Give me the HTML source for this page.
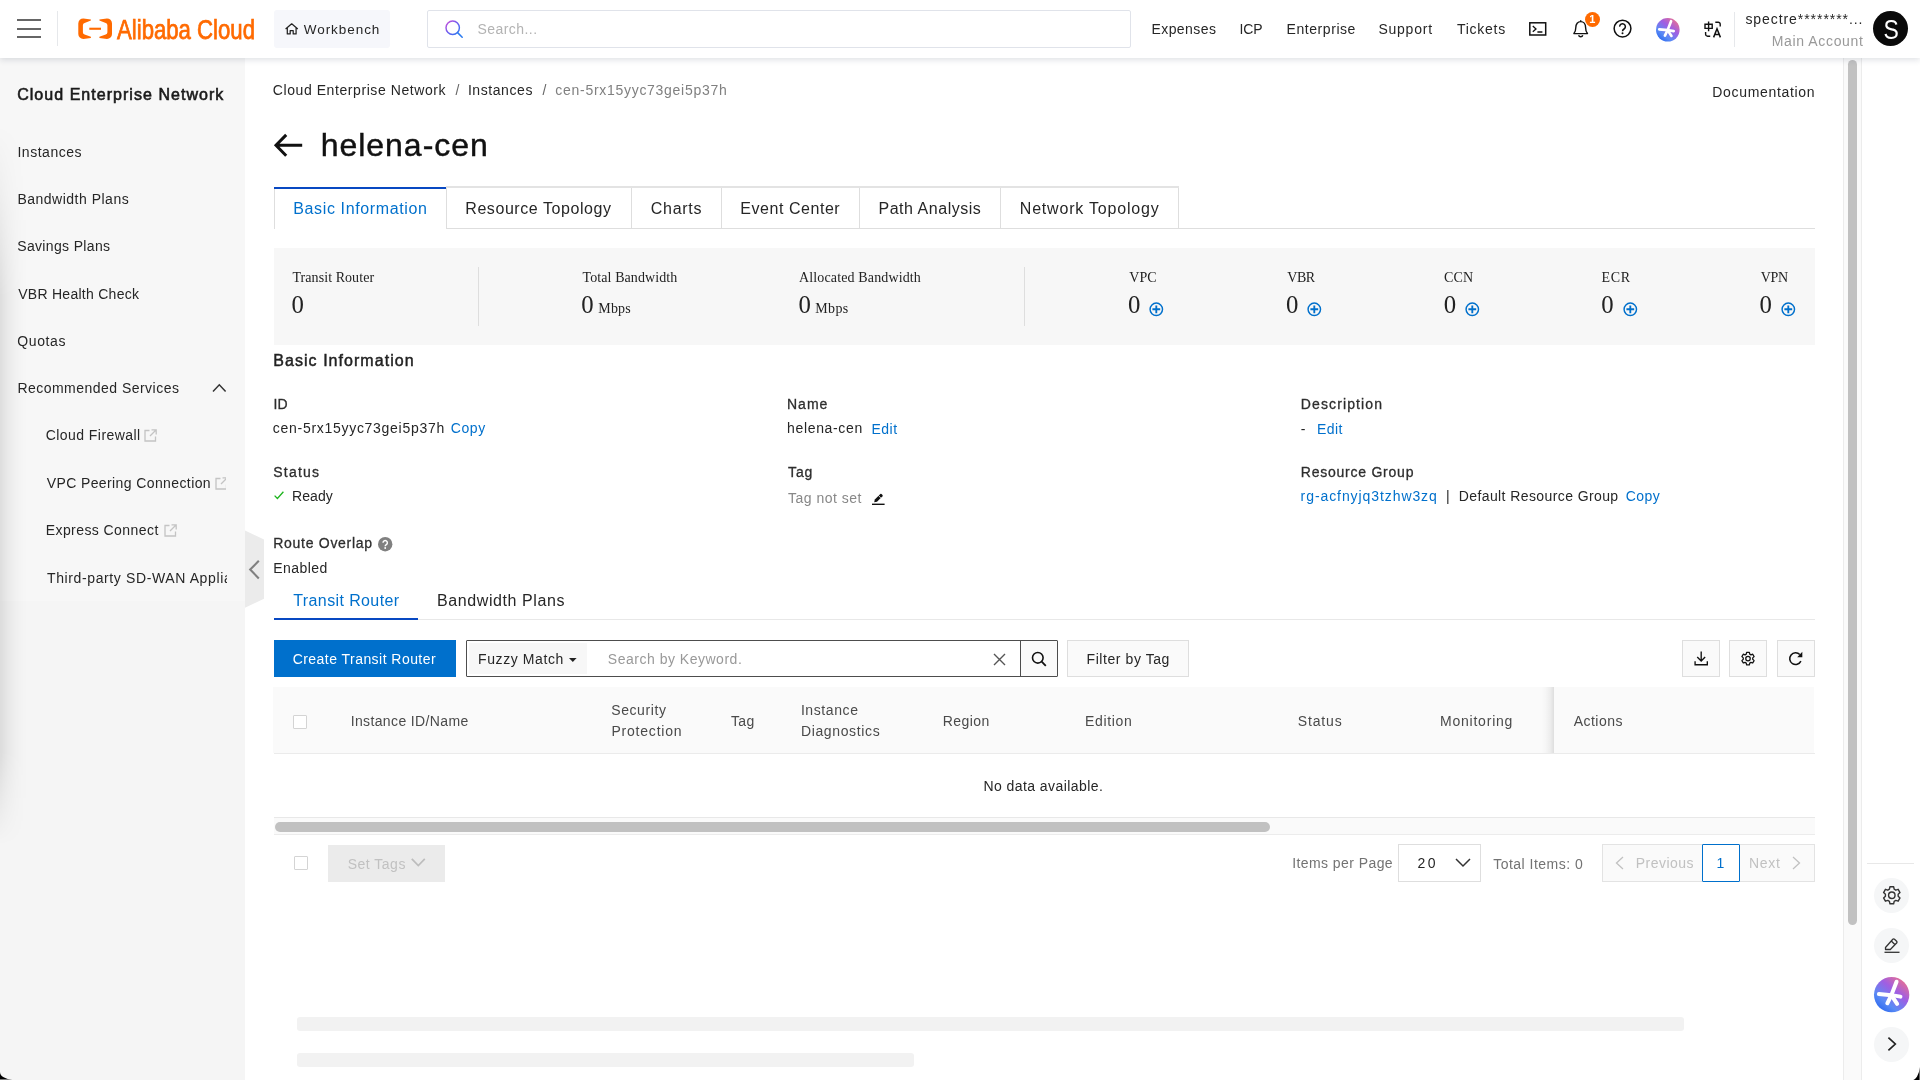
<!DOCTYPE html>
<html lang="en">
<head>
<meta charset="utf-8">
<title>Cloud Enterprise Network</title>
<style>
*{box-sizing:border-box;margin:0;padding:0}
html,body{width:1920px;height:1080px;overflow:hidden;background:#fff;font-family:"Liberation Sans",sans-serif;color:#333}
.a{position:absolute}
.t{position:absolute;white-space:pre;display:block}
#top{left:0;top:0;width:1920px;height:58px;background:#fff;box-shadow:0 2px 6px rgba(25,40,70,.14);z-index:5}
#side{left:0;top:58px;width:245px;height:1022px;background:#f7f7f7}
#sideshade{left:0;top:125px;width:28px;height:720px;background:linear-gradient(90deg,rgba(0,0,0,.1),rgba(0,0,0,.062) 22%,rgba(0,0,0,.028) 50%,rgba(0,0,0,.008) 78%,rgba(0,0,0,0));-webkit-mask-image:linear-gradient(180deg,transparent,rgba(0,0,0,.35) 10%,#000 24%,#000 87%,rgba(0,0,0,.3) 96%,transparent);mask-image:linear-gradient(180deg,transparent,rgba(0,0,0,.35) 10%,#000 24%,#000 87%,rgba(0,0,0,.3) 96%,transparent)}
#rbar{left:1860.5px;top:58px;width:59.5px;height:1022px;background:#fff;border-left:1px solid #ececec}
#vtrack{left:1843px;top:58px;width:18px;height:1022px;background:#fafafa;border-left:1px solid #ececec}
#vthumb{left:1848px;top:60.2px;width:9px;height:864.6px;background:#c1c1c1;border-radius:5px}
.ln{position:absolute;background:#e3e4e6}
.box{position:absolute;border:1px solid #dedede;background:#fff}
svg{position:absolute;overflow:visible}
</style>
</head>
<body>
<!-- sidebar -->
<div class="a" id="side"></div>
<div class="a" style="left:0;top:600.6px;width:245px;height:479.4px;background:#f5f5f5"></div>
<div class="a" id="sideshade"></div>
<!-- collapse handle -->
<svg style="left:245px;top:529px" width="20" height="80" viewBox="0 0 20 80"><path d="M0 1.4 L19 10.6 L19 69.7 L0 78.8 Z" fill="#ebebeb"/><path d="M13.8 31.8 L5.2 40.6 L13.8 49.4" fill="none" stroke="#808080" stroke-width="2.1"/></svg>
<!-- sidebar chevron up -->
<svg style="left:212px;top:383px" width="15" height="10" viewBox="0 0 15 10"><path d="M1 8.5 L7.3 1.8 L13.6 8.5" fill="none" stroke="#333" stroke-width="1.5"/></svg>
<!-- external link icons -->
<svg style="left:143.9px;top:429.4px" width="13" height="13" viewBox="0 0 13 13"><path d="M5.5 1.5H1V12H11.5V7.5M7.5 0.8H12.2V5.5M12 1L6 7" fill="none" stroke="#c4c4c4" stroke-width="1.3"/></svg>
<svg style="left:214.5px;top:477px" width="13" height="13" viewBox="0 0 13 13"><path d="M5.5 1.5H1V12H11.5V7.5M7.5 0.8H12.2V5.5M12 1L6 7" fill="none" stroke="#c4c4c4" stroke-width="1.3"/></svg>
<svg style="left:164px;top:524.3px" width="13" height="13" viewBox="0 0 13 13"><path d="M5.5 1.5H1V12H11.5V7.5M7.5 0.8H12.2V5.5M12 1L6 7" fill="none" stroke="#c4c4c4" stroke-width="1.3"/></svg>
<div class="a" style="left:226px;top:470px;width:19px;height:30px;background:#f7f7f7"></div>

<!-- right bar + scrollbar -->
<div class="a" id="vtrack"></div>
<div class="a" id="vthumb"></div>
<div class="a" id="rbar"></div>
<div class="ln" style="left:1867px;top:862.5px;width:47px;height:1px;background:#e8e8e8"></div>
<div class="a" style="left:1873.8px;top:877.6px;width:35.3px;height:35.3px;border-radius:50%;background:#f5f6f7"></div>
<div class="a" style="left:1873.8px;top:927.5px;width:35.3px;height:35.3px;border-radius:50%;background:#f5f6f7"></div>
<div class="a" style="left:1873.8px;top:1026.7px;width:35.3px;height:35.3px;border-radius:50%;background:#f5f6f7"></div>
<!-- gear (right bar) -->
<svg style="left:1880.8px;top:885.3px" width="21.6" height="21.6" viewBox="0 0 20 20"><path d="M8.3 1.6h3.4l.5 2.3 1.5.9 2.2-.8 1.7 3-1.7 1.6v1.8l1.7 1.6-1.7 3-2.2-.8-1.5.9-.5 2.3H8.3l-.5-2.3-1.5-.9-2.2.8-1.7-3 1.7-1.6V8.6L2.4 7l1.7-3 2.2.8 1.5-.9z" fill="none" stroke="#333" stroke-width="1.3" stroke-linejoin="round"/><circle cx="10" cy="9.5" r="3" fill="none" stroke="#333" stroke-width="1.3"/></svg>
<!-- edit (right bar) -->
<svg style="left:1883px;top:936px" width="18" height="18" viewBox="0 0 18 18"><path d="M2.5 11.5 L9.8 3.2 a1.2 1.2 0 0 1 1.7 0 L13.6 5.3 a1.2 1.2 0 0 1 0 1.7 L7.3 13.5 H2.5 Z M8.3 5 L11.8 8.5" fill="none" stroke="#333" stroke-width="1.3" stroke-linejoin="round"/><path d="M1.5 16.3H16.5" stroke="#333" stroke-width="1.3"/></svg>
<!-- AI logo (right bar) -->
<svg style="left:1873.8px;top:976.9px" width="35.3" height="35.3" viewBox="0 0 36 36"><defs><linearGradient id="g2" x1="0.9" y1="0.1" x2="0.2" y2="0.95"><stop offset="0" stop-color="#ea7090"/><stop offset="0.38" stop-color="#a05ee2"/><stop offset="0.75" stop-color="#5b8bf5"/><stop offset="1" stop-color="#2f6bf0"/></linearGradient></defs><circle cx="18" cy="18" r="18" fill="url(#g2)"/><g stroke="#fff" stroke-width="4.1" stroke-linecap="round"><path d="M23 4.8 L17.7 18.5"/><path d="M5 17.4 L17.7 18.5"/><path d="M17.7 18.5 L13.6 26.8"/><path d="M17.7 18.5 L23.6 27.4"/><path d="M17.7 18.5 L27 20"/></g></svg>
<!-- chevron right (right bar) -->
<svg style="left:1886px;top:1035.4px" width="12" height="18" viewBox="0 0 12 18"><path d="M2.4 2.6 L9.3 9 L2.4 15.4" fill="none" stroke="#222" stroke-width="1.7"/></svg>

<!-- breadcrumb / title -->
<svg style="left:273.6px;top:133.5px" width="30" height="23" viewBox="0 0 30 23"><path d="M2 11.3H28.2M12.2 0.9 L2 11.3 L12.2 21.7" fill="none" stroke="#111" stroke-width="3"/></svg>

<!-- tabs -->
<div class="box" style="left:273.5px;top:186.5px;width:905px;height:42px;border-color:#dedede"></div>
<div class="ln" style="left:273.5px;top:227.5px;width:1541px;height:1px;background:#dedede"></div>
<div class="ln" style="left:446px;top:187px;width:1px;height:41px;background:#dedede"></div>
<div class="ln" style="left:631px;top:187px;width:1px;height:41px;background:#dedede"></div>
<div class="ln" style="left:721px;top:187px;width:1px;height:41px;background:#dedede"></div>
<div class="ln" style="left:859px;top:187px;width:1px;height:41px;background:#dedede"></div>
<div class="ln" style="left:1000px;top:187px;width:1px;height:41px;background:#dedede"></div>
<div class="a" style="left:274.5px;top:226px;width:171.5px;height:3px;background:#fff"></div>
<div class="ln" style="left:446px;top:186.3px;width:732.5px;height:1.5px;background:#e3e3e3"></div>
<div class="a" style="left:273.5px;top:186.6px;width:172.3px;height:2.1px;background:#0848c2"></div>

<!-- stats panel -->
<div class="a" style="left:273.5px;top:248px;width:1541px;height:96.5px;background:#f7f7f7"></div>
<div class="ln" style="left:478px;top:267px;width:1px;height:58.5px;background:#dedede"></div>
<div class="ln" style="left:1024px;top:267px;width:1px;height:58.5px;background:#dedede"></div>
<svg style="left:1149.4px;top:301.6px" width="14.6" height="14.6" viewBox="0 0 15 15"><circle cx="7.5" cy="7.5" r="6.4" fill="none" stroke="#0070cc" stroke-width="1.5"/><path d="M7.5 3.5V11.5M3.5 7.5H11.5" stroke="#0070cc" stroke-width="1.9"/></svg>
<svg style="left:1307.2px;top:301.6px" width="14.6" height="14.6" viewBox="0 0 15 15"><circle cx="7.5" cy="7.5" r="6.4" fill="none" stroke="#0070cc" stroke-width="1.5"/><path d="M7.5 3.5V11.5M3.5 7.5H11.5" stroke="#0070cc" stroke-width="1.9"/></svg>
<svg style="left:1465.0px;top:301.6px" width="14.6" height="14.6" viewBox="0 0 15 15"><circle cx="7.5" cy="7.5" r="6.4" fill="none" stroke="#0070cc" stroke-width="1.5"/><path d="M7.5 3.5V11.5M3.5 7.5H11.5" stroke="#0070cc" stroke-width="1.9"/></svg>
<svg style="left:1622.8px;top:301.6px" width="14.6" height="14.6" viewBox="0 0 15 15"><circle cx="7.5" cy="7.5" r="6.4" fill="none" stroke="#0070cc" stroke-width="1.5"/><path d="M7.5 3.5V11.5M3.5 7.5H11.5" stroke="#0070cc" stroke-width="1.9"/></svg>
<svg style="left:1780.7px;top:301.6px" width="14.6" height="14.6" viewBox="0 0 15 15"><circle cx="7.5" cy="7.5" r="6.4" fill="none" stroke="#0070cc" stroke-width="1.5"/><path d="M7.5 3.5V11.5M3.5 7.5H11.5" stroke="#0070cc" stroke-width="1.9"/></svg>


<!-- basic info icons -->
<svg style="left:273.5px;top:491px" width="10" height="9" viewBox="0 0 10 9"><path d="M0.6 4.6 L3.4 7.5 L9.4 0.8" fill="none" stroke="#1eb41e" stroke-width="1.3"/></svg>
<svg style="left:378.1px;top:536.5px" width="14.4" height="14.4" viewBox="0 0 14 14"><circle cx="7" cy="7" r="7" fill="#808080"/><path d="M4.9 5.6 a2.1 2.1 0 1 1 3.2 1.8 c-.8.5-1.1.8-1.1 1.6" fill="none" stroke="#fff" stroke-width="1.4"/><circle cx="7" cy="10.7" r=".9" fill="#fff"/></svg>
<svg style="left:872px;top:493px" width="13" height="12" viewBox="0 0 13 12"><path d="M2.2 9.3 L2.8 6.6 L8.3 1.1 a.9.9 0 0 1 1.2 0 l1 1 a.9.9 0 0 1 0 1.2 L5 8.8 Z" fill="#111"/><path d="M6.3 2.3L8.9 5.1" stroke="#fff" stroke-width="0.75"/><path d="M0 11.3H12.6" stroke="#111" stroke-width="1.4"/></svg>

<!-- sub tabs -->
<div class="ln" style="left:273.5px;top:618.9px;width:1541px;height:1.6px;background:#e8e8e8"></div>
<div class="a" style="left:273.5px;top:618.2px;width:144.6px;height:2.1px;background:#0848c2"></div>

<!-- toolbar -->
<div class="a" style="left:273.5px;top:640px;width:182.5px;height:37px;background:#0070cc"></div>
<div class="a" style="left:466px;top:640px;width:591.5px;height:37px;border:1px solid #4d4d4d;background:#fff;border-radius:1px"></div>
<div class="a" style="left:469px;top:643.2px;width:118px;height:30.6px;background:#f7f7f7"></div>
<svg style="left:569.2px;top:658px" width="7.6" height="4.2" viewBox="0 0 9 5" preserveAspectRatio="none"><path d="M0 0H9L4.5 4.8Z" fill="#222"/></svg>
<svg style="left:992.5px;top:652.5px" width="13" height="13" viewBox="0 0 13 13"><path d="M1 1L12 12M12 1L1 12" stroke="#555" stroke-width="1.4" fill="none"/></svg>
<div class="a" style="left:1021px;top:641px;width:35.5px;height:35px;background:#fafafa"></div>
<div class="ln" style="left:1020px;top:640px;width:1px;height:37px;background:#4d4d4d"></div>
<svg style="left:1031px;top:651px" width="16" height="16" viewBox="0 0 16 16"><circle cx="6.8" cy="6.8" r="5.3" fill="none" stroke="#111" stroke-width="1.6"/><path d="M10.7 10.7L14.8 14.8" stroke="#111" stroke-width="1.8"/></svg>
<div class="box" style="left:1067px;top:640px;width:121.5px;height:37px;background:#fafafa"></div>
<div class="box" style="left:1682px;top:640px;width:37.5px;height:37px;background:#fafafa"></div>
<div class="box" style="left:1729px;top:640px;width:38px;height:37px;background:#fafafa"></div>
<div class="box" style="left:1777px;top:640px;width:37.5px;height:37px;background:#fafafa"></div>
<!-- download -->
<svg style="left:1693.8px;top:651px" width="14.4" height="15" viewBox="0 0 16 16" preserveAspectRatio="none"><path d="M8 0.5V10.5M3.6 6.3L8 10.7L12.4 6.3M1.2 10.8V14.6H14.8V10.8" fill="none" stroke="#111" stroke-width="1.5"/></svg>
<!-- gear small -->
<svg style="left:1740.2px;top:650.7px" width="16" height="16" viewBox="0 0 20 20"><path d="M8.3 1.6h3.4l.5 2.3 1.5.9 2.2-.8 1.7 3-1.7 1.6v1.8l1.7 1.6-1.7 3-2.2-.8-1.5.9-.5 2.3H8.3l-.5-2.3-1.5-.9-2.2.8-1.7-3 1.7-1.6V8.6L2.4 7l1.7-3 2.2.8 1.5-.9z" fill="none" stroke="#111" stroke-width="1.6" stroke-linejoin="round"/><circle cx="10" cy="9.5" r="2.8" fill="none" stroke="#111" stroke-width="1.6"/></svg>
<!-- refresh -->
<svg style="left:1788.2px;top:651px" width="15.4" height="15.4" viewBox="0 0 16 16"><path d="M13.4 10.6 A6.1 6.1 0 1 1 12.3 3.7" fill="none" stroke="#111" stroke-width="1.6"/><path d="M14.9 0.8V6.4H9.6Z" fill="#111"/></svg>

<!-- table -->
<div class="a" style="left:273.1px;top:687.2px;width:1541.4px;height:66.3px;background:#fafafa"></div>
<div class="ln" style="left:273.5px;top:753.4px;width:1541px;height:1.1px;background:#ebebeb"></div>
<div class="a" style="left:1541px;top:687.2px;width:13px;height:66.3px;background:linear-gradient(90deg,rgba(0,0,0,0),rgba(0,0,0,.015) 35%,rgba(0,0,0,.05) 70%,rgba(0,0,0,.115))"></div>
<div class="a" style="left:292.5px;top:715px;width:14px;height:14px;border:1px solid #d4d4d4;background:#fff;border-radius:1px"></div>
<div class="ln" style="left:273.5px;top:816.5px;width:1541px;height:1px;background:#e8e8e8"></div>
<div class="a" style="left:273.5px;top:817.5px;width:1541px;height:16.5px;background:#fafafa"></div>
<div class="ln" style="left:273.5px;top:833.5px;width:1541px;height:1px;background:#ececec"></div>
<div class="a" style="left:275px;top:822px;width:995px;height:9.5px;background:#c1c1c1;border-radius:5px"></div>

<!-- footer -->
<div class="a" style="left:293.5px;top:856.1px;width:14px;height:14px;border:1px solid #d4d4d4;background:#fff;border-radius:1px"></div>
<div class="a" style="left:328px;top:844.6px;width:117px;height:37.3px;background:#ebebeb"></div>
<svg style="left:411px;top:858px" width="15" height="9" viewBox="0 0 15 9"><path d="M0.8 0.8L7.3 7.6L13.8 0.8" fill="none" stroke="#bdbdbd" stroke-width="1.7"/></svg>
<div class="box" style="left:1398px;top:844px;width:82.5px;height:37.5px;"></div>
<svg style="left:1455px;top:857.5px" width="16" height="10" viewBox="0 0 16 10"><path d="M1 1L8 8L15 1" fill="none" stroke="#333" stroke-width="1.5"/></svg>
<div class="box" style="left:1602px;top:844px;width:212.5px;height:37.5px;background:#fafafa;border-color:#e3e3e3"></div>
<div class="a" style="left:1702px;top:844px;width:38px;height:37.5px;border:1px solid #0070cc;background:#fff;border-radius:1px"></div>
<svg style="left:1615px;top:856px" width="9" height="14" viewBox="0 0 9 14"><path d="M8 1L1.5 7L8 13" fill="none" stroke="#c1c1c1" stroke-width="1.3"/></svg>
<svg style="left:1792px;top:856px" width="9" height="14" viewBox="0 0 9 14"><path d="M1 1L7.5 7L1 13" fill="none" stroke="#c1c1c1" stroke-width="1.3"/></svg>

<!-- skeleton bars -->
<div class="a" style="left:297px;top:1017.1px;width:1387px;height:14.2px;background:#f2f2f2;border-radius:3px"></div>
<div class="a" style="left:297px;top:1052.6px;width:616.5px;height:14.2px;background:#f2f2f2;border-radius:3px"></div>

<!-- top bar -->
<div class="a" id="top"></div>
<div class="a" style="z-index:6;left:0;top:0;width:1920px;height:58px;will-change:transform">
  <div class="a" style="left:17px;top:19px;width:23.5px;height:2px;background:#666"></div>
  <div class="a" style="left:17px;top:27.7px;width:23.5px;height:2px;background:#666"></div>
  <div class="a" style="left:17px;top:36.3px;width:23.5px;height:2px;background:#666"></div>
  <div class="ln" style="left:57px;top:11px;width:1px;height:35px;background:#e6e8eb"></div>
  <!-- logo bracket -->
  <svg style="left:77.5px;top:18px" width="35" height="22" viewBox="0 0 35 22"><path d="M12.9 1.4 L5.4 0.4 A5 5 0 0 0 0.3 5.4 V16 A5 5 0 0 0 5.4 21 L12.9 20 V18.8 L6.6 16.5 A2.4 2.4 0 0 1 4.9 14.2 V7.2 A2.4 2.4 0 0 1 6.6 4.9 L12.9 2.6 Z" fill="#ff6a00"/><path d="M21.4 1.4 L28.9 0.4 A5 5 0 0 1 34 5.4 V16 A5 5 0 0 1 28.9 21 L21.4 20 V18.8 L27.7 16.5 A2.4 2.4 0 0 0 29.4 14.2 V7.2 A2.4 2.4 0 0 0 27.7 4.9 L21.4 2.6 Z" fill="#ff6a00"/><rect x="11.3" y="9.7" width="11.7" height="2.1" fill="#ff6a00"/></svg>
  <svg style="left:117.4px;top:12px" width="140" height="34" viewBox="0 0 140 34"><text x="0" y="26.6" font-family="Liberation Sans, sans-serif" font-size="27.2" fill="#ff6a00" stroke="#ff6a00" stroke-width="0.75" textLength="138" lengthAdjust="spacingAndGlyphs">Alibaba Cloud</text></svg>
  <div class="a" style="left:273.5px;top:10px;width:116px;height:37.5px;background:#f6f7fb;border-radius:3px"></div>
  <svg style="left:284.6px;top:23.2px" width="13.4" height="11.6" viewBox="0 0 13.4 11.6"><path d="M0.6 5.9L6.7 0.8L12.8 5.9M2.3 4.8V10.9H5.2V7.6H8.2V10.9H11.1V4.8" fill="none" stroke="#222" stroke-width="1.25" stroke-linejoin="round"/></svg>
  <div class="a" style="left:427px;top:10px;width:704px;height:37.5px;border:1px solid #e0e3ea;background:#fff;border-radius:2px"></div>
  <svg style="left:444px;top:19px" width="20" height="20" viewBox="0 0 20 20"><defs><linearGradient id="sg" x1="0" y1="0" x2="1" y2="1"><stop offset="0" stop-color="#d04fd8"/><stop offset="0.5" stop-color="#6a5cf0"/><stop offset="1" stop-color="#2b7bf0"/></linearGradient></defs><circle cx="8.7" cy="8.7" r="6.7" fill="none" stroke="url(#sg)" stroke-width="1.45"/><path d="M13.6 13.6L18.2 18.2" stroke="#2b7bf0" stroke-width="1.5" stroke-linecap="round"/></svg>
  <!-- terminal -->
  <svg style="left:1528.9px;top:21.7px" width="17.5" height="13.8" viewBox="0 0 17.5 13.8"><rect x="0.8" y="0.8" width="15.9" height="12.2" fill="none" stroke="#111" stroke-width="1.5"/><path d="M3.8 4L7 6.9L3.8 9.8M8.4 10H13.4" fill="none" stroke="#111" stroke-width="1.3"/></svg>
  <!-- bell -->
  <svg style="left:1572.5px;top:19.8px" width="15.4" height="18" viewBox="0 0 15.4 18"><path d="M7.7 0.2V1.6M0.9 13.6H14.5C13 12 12.6 10.6 12.6 7.6C12.6 4 10.6 1.6 7.7 1.6C4.8 1.6 2.8 4 2.8 7.6C2.8 10.6 2.4 12 0.9 13.6Z" fill="none" stroke="#111" stroke-width="1.4" stroke-linejoin="round"/><path d="M5.6 15.2A2.2 2.2 0 0 0 9.8 15.2" fill="none" stroke="#111" stroke-width="1.4"/></svg>
  <div class="a" style="left:1584.7px;top:12px;width:15px;height:15px;border-radius:50%;background:#ff6a00"></div>
  <div class="a" style="left:1584.7px;top:12px;width:15px;height:15px;text-align:center;font:700 11px/15px 'Liberation Sans',sans-serif;color:#fff">1</div>
  <!-- help -->
  <svg style="left:1613.4px;top:19.2px" width="19.06" height="19.06" viewBox="0 0 20 20"><circle cx="10" cy="10" r="8.8" fill="none" stroke="#111" stroke-width="1.6"/><path d="M7 8 a3 3 0 1 1 4.6 2.5 c-1.1.7-1.6 1.2-1.6 2.4" fill="none" stroke="#111" stroke-width="1.6"/><circle cx="10" cy="15" r="1.05" fill="#111"/></svg>
  <!-- AI logo -->
  <svg style="left:1656.1px;top:17.6px" width="23.6" height="23.6" viewBox="0 0 36 36"><defs><linearGradient id="g1" x1="0.9" y1="0.1" x2="0.2" y2="0.95"><stop offset="0" stop-color="#ea7090"/><stop offset="0.38" stop-color="#a05ee2"/><stop offset="0.75" stop-color="#5b8bf5"/><stop offset="1" stop-color="#2f6bf0"/></linearGradient></defs><circle cx="18" cy="18" r="18" fill="url(#g1)"/><g stroke="#fff" stroke-width="4.1" stroke-linecap="round"><path d="M23 4.8 L17.7 18.5"/><path d="M5 17.4 L17.7 18.5"/><path d="M17.7 18.5 L13.6 26.8"/><path d="M17.7 18.5 L23.6 27.4"/><path d="M17.7 18.5 L27 20"/></g></svg>
  <!-- translate -->
  <svg style="left:1704px;top:20.5px" width="18" height="17" viewBox="0 0 18 17"><path d="M1 3.2H8.2V7.4H1ZM4.6 0.6V10.2" fill="none" stroke="#111" stroke-width="1.4"/><path d="M11.3 1.2H14.2A2 2 0 0 1 16.2 3.2V5.4" fill="none" stroke="#111" stroke-width="1.4"/><path d="M1.6 11V13.2A2 2 0 0 0 3.6 15.2H6.2" fill="none" stroke="#111" stroke-width="1.4"/><path d="M9.6 16.4L13 7.8L16.4 16.4M10.7 13.6H15.3" fill="none" stroke="#111" stroke-width="1.5"/></svg>
  <div class="ln" style="left:1734px;top:11.5px;width:1px;height:35px;background:#e6e8eb"></div>
  <div class="a" style="left:1873px;top:11.2px;width:35.2px;height:35.2px;border-radius:50%;background:#0a0a0a"></div>
  <svg style="left:1880px;top:14px" width="22" height="30" viewBox="0 0 22 30"><text x="3.4" y="24.7" font-family="Liberation Sans, sans-serif" font-size="27.6" fill="#fff" textLength="15.3" lengthAdjust="spacingAndGlyphs">S</text></svg>
</div>
<div style="position:absolute;left:0;top:0;width:1920px;height:1080px;z-index:7;will-change:transform">
<span class="t" style="left:303.80px;top:22.67px;font:400 13.5px/1 'Liberation Sans', sans-serif;color:#262626;letter-spacing:0.938px;">Workbench</span>
<span class="t" style="left:477.50px;top:22.15px;font:400 14px/1 'Liberation Sans', sans-serif;color:#b3b3b3;letter-spacing:0.438px;">Search...</span>
<span class="t" style="left:1151.50px;top:21.95px;font:400 14px/1 'Liberation Sans', sans-serif;color:#262626;letter-spacing:0.414px;">Expenses</span>
<span class="t" style="left:1239.60px;top:21.95px;font:400 14px/1 'Liberation Sans', sans-serif;color:#262626;letter-spacing:-0.150px;">ICP</span>
<span class="t" style="left:1286.50px;top:21.95px;font:400 14px/1 'Liberation Sans', sans-serif;color:#262626;letter-spacing:0.567px;">Enterprise</span>
<span class="t" style="left:1378.40px;top:21.95px;font:400 14px/1 'Liberation Sans', sans-serif;color:#262626;letter-spacing:0.767px;">Support</span>
<span class="t" style="left:1457.00px;top:21.95px;font:400 14px/1 'Liberation Sans', sans-serif;color:#262626;letter-spacing:0.733px;">Tickets</span>
<span class="t" style="left:1745.40px;top:12.15px;font:400 14px/1 'Liberation Sans', sans-serif;color:#262626;letter-spacing:0.935px;">spectre********...</span>
<span class="t" style="left:1771.70px;top:34.45px;font:400 14px/1 'Liberation Sans', sans-serif;color:#999;letter-spacing:0.645px;">Main Account</span>
<span class="t" style="left:17.20px;top:86.96px;font:400 16px/1 'Liberation Sans', sans-serif;color:#1a1a1a;letter-spacing:1.035px;-webkit-text-stroke:0.6px #1a1a1a;">Cloud Enterprise Network</span>
<span class="t" style="left:17.40px;top:144.95px;font:400 14px/1 'Liberation Sans', sans-serif;color:#262626;letter-spacing:0.538px;">Instances</span>
<span class="t" style="left:17.40px;top:192.15px;font:400 14px/1 'Liberation Sans', sans-serif;color:#262626;letter-spacing:0.500px;">Bandwidth Plans</span>
<span class="t" style="left:17.20px;top:239.45px;font:400 14px/1 'Liberation Sans', sans-serif;color:#262626;letter-spacing:0.350px;">Savings Plans</span>
<span class="t" style="left:18.20px;top:286.65px;font:400 14px/1 'Liberation Sans', sans-serif;color:#262626;letter-spacing:0.273px;">VBR Health Check</span>
<span class="t" style="left:17.20px;top:333.95px;font:400 14px/1 'Liberation Sans', sans-serif;color:#262626;letter-spacing:0.640px;">Quotas</span>
<span class="t" style="left:17.40px;top:381.25px;font:400 14px/1 'Liberation Sans', sans-serif;color:#262626;letter-spacing:0.474px;">Recommended Services</span>
<span class="t" style="left:45.70px;top:428.35px;font:400 14px/1 'Liberation Sans', sans-serif;color:#262626;letter-spacing:0.446px;">Cloud Firewall</span>
<span class="t" style="left:46.70px;top:475.65px;font:400 14px/1 'Liberation Sans', sans-serif;color:#262626;letter-spacing:0.395px;">VPC Peering Connection</span>
<span class="t" style="left:45.70px;top:522.85px;font:400 14px/1 'Liberation Sans', sans-serif;color:#262626;letter-spacing:0.429px;">Express Connect</span>
<span class="t" style="left:47.00px;top:570.65px;font:400 14px/1 'Liberation Sans', sans-serif;color:#262626;letter-spacing:0.617px;width:179.8px;overflow:hidden;height:16px;">Third-party SD-WAN Appliance</span>
<span class="t" style="left:272.80px;top:83.15px;font:400 14px/1 'Liberation Sans', sans-serif;color:#262626;letter-spacing:0.574px;">Cloud Enterprise Network</span>
<span class="t" style="left:455.50px;top:83.15px;font:400 14px/1 'Liberation Sans', sans-serif;color:#666;">/</span>
<span class="t" style="left:467.90px;top:83.15px;font:400 14px/1 'Liberation Sans', sans-serif;color:#262626;letter-spacing:0.575px;">Instances</span>
<span class="t" style="left:542.50px;top:83.15px;font:400 14px/1 'Liberation Sans', sans-serif;color:#666;">/</span>
<span class="t" style="left:555.30px;top:83.15px;font:400 14px/1 'Liberation Sans', sans-serif;color:#808080;letter-spacing:0.714px;">cen-5rx15yyc73gei5p37h</span>
<span class="t" style="left:1712.30px;top:85.15px;font:400 14px/1 'Liberation Sans', sans-serif;color:#262626;letter-spacing:0.667px;">Documentation</span>
<span class="t" style="left:320.70px;top:129.41px;font:400 32px/1 'Liberation Sans', sans-serif;color:#111;letter-spacing:0.978px;-webkit-text-stroke:0.45px #111;">helena-cen</span>
<span class="t" style="left:293.30px;top:200.76px;font:400 16px/1 'Liberation Sans', sans-serif;color:#0070cc;letter-spacing:0.625px;">Basic Information</span>
<span class="t" style="left:465.30px;top:200.76px;font:400 16px/1 'Liberation Sans', sans-serif;color:#262626;letter-spacing:0.562px;">Resource Topology</span>
<span class="t" style="left:650.80px;top:200.76px;font:400 16px/1 'Liberation Sans', sans-serif;color:#262626;letter-spacing:0.700px;">Charts</span>
<span class="t" style="left:740.30px;top:200.76px;font:400 16px/1 'Liberation Sans', sans-serif;color:#262626;letter-spacing:0.545px;">Event Center</span>
<span class="t" style="left:878.50px;top:200.76px;font:400 16px/1 'Liberation Sans', sans-serif;color:#262626;letter-spacing:0.525px;">Path Analysis</span>
<span class="t" style="left:1019.80px;top:200.76px;font:400 16px/1 'Liberation Sans', sans-serif;color:#262626;letter-spacing:0.800px;">Network Topology</span>
<span class="t" style="left:292.50px;top:271.27px;font:400 14px/1 'Liberation Serif', serif;color:#222;letter-spacing:0.062px;">Transit Router</span>
<span class="t" style="left:291.50px;top:293.03px;font:400 24.8px/1 'Liberation Serif', serif;color:#222;">0</span>
<span class="t" style="left:582.50px;top:271.27px;font:400 14px/1 'Liberation Serif', serif;color:#222;letter-spacing:0.093px;">Total Bandwidth</span>
<span class="t" style="left:581.30px;top:293.03px;font:400 24.8px/1 'Liberation Serif', serif;color:#222;">0</span>
<span class="t" style="left:598.30px;top:302.17px;font:400 14px/1 'Liberation Serif', serif;color:#222;letter-spacing:0.167px;">Mbps</span>
<span class="t" style="left:799.00px;top:271.27px;font:400 14px/1 'Liberation Serif', serif;color:#222;letter-spacing:0.139px;">Allocated Bandwidth</span>
<span class="t" style="left:798.50px;top:293.03px;font:400 24.8px/1 'Liberation Serif', serif;color:#222;">0</span>
<span class="t" style="left:815.30px;top:302.17px;font:400 14px/1 'Liberation Serif', serif;color:#222;letter-spacing:0.333px;">Mbps</span>
<span class="t" style="left:1129.20px;top:271.27px;font:400 14px/1 'Liberation Serif', serif;color:#222;letter-spacing:0.100px;">VPC</span>
<span class="t" style="left:1127.90px;top:293.03px;font:400 24.8px/1 'Liberation Serif', serif;color:#222;">0</span>
<span class="t" style="left:1287.20px;top:271.27px;font:400 14px/1 'Liberation Serif', serif;color:#222;letter-spacing:-0.400px;">VBR</span>
<span class="t" style="left:1285.90px;top:293.03px;font:400 24.8px/1 'Liberation Serif', serif;color:#222;">0</span>
<span class="t" style="left:1444.00px;top:271.27px;font:400 14px/1 'Liberation Serif', serif;color:#222;letter-spacing:0.100px;">CCN</span>
<span class="t" style="left:1443.70px;top:293.03px;font:400 24.8px/1 'Liberation Serif', serif;color:#222;">0</span>
<span class="t" style="left:1601.60px;top:271.27px;font:400 14px/1 'Liberation Serif', serif;color:#222;letter-spacing:0.600px;">ECR</span>
<span class="t" style="left:1601.30px;top:293.03px;font:400 24.8px/1 'Liberation Serif', serif;color:#222;">0</span>
<span class="t" style="left:1760.80px;top:271.27px;font:400 14px/1 'Liberation Serif', serif;color:#222;letter-spacing:-0.400px;">VPN</span>
<span class="t" style="left:1759.50px;top:293.03px;font:400 24.8px/1 'Liberation Serif', serif;color:#222;">0</span>
<span class="t" style="left:273.30px;top:353.26px;font:400 16px/1 'Liberation Sans', sans-serif;color:#222;letter-spacing:1.044px;-webkit-text-stroke:0.45px #222;">Basic Information</span>
<span class="t" style="left:273.50px;top:397.45px;font:400 14px/1 'Liberation Sans', sans-serif;color:#2b2b2b;-webkit-text-stroke:0.3px #333;">ID</span>
<span class="t" style="left:272.80px;top:421.15px;font:400 14px/1 'Liberation Sans', sans-serif;color:#262626;letter-spacing:0.714px;">cen-5rx15yyc73gei5p37h</span>
<span class="t" style="left:450.80px;top:421.15px;font:400 14px/1 'Liberation Sans', sans-serif;color:#0070cc;letter-spacing:0.567px;">Copy</span>
<span class="t" style="left:273.30px;top:465.15px;font:400 14px/1 'Liberation Sans', sans-serif;color:#2b2b2b;letter-spacing:1.200px;-webkit-text-stroke:0.3px #333;">Status</span>
<span class="t" style="left:292.00px;top:488.65px;font:400 14px/1 'Liberation Sans', sans-serif;color:#262626;letter-spacing:0.075px;">Ready</span>
<span class="t" style="left:273.30px;top:536.15px;font:400 14px/1 'Liberation Sans', sans-serif;color:#2b2b2b;letter-spacing:0.708px;-webkit-text-stroke:0.3px #333;">Route Overlap</span>
<span class="t" style="left:273.30px;top:561.15px;font:400 14px/1 'Liberation Sans', sans-serif;color:#262626;letter-spacing:0.417px;">Enabled</span>
<span class="t" style="left:787.00px;top:397.45px;font:400 14px/1 'Liberation Sans', sans-serif;color:#2b2b2b;letter-spacing:1.000px;-webkit-text-stroke:0.3px #333;">Name</span>
<span class="t" style="left:787.00px;top:421.15px;font:400 14px/1 'Liberation Sans', sans-serif;color:#262626;letter-spacing:0.667px;">helena-cen</span>
<span class="t" style="left:871.50px;top:422.35px;font:400 14px/1 'Liberation Sans', sans-serif;color:#0070cc;letter-spacing:0.500px;">Edit</span>
<span class="t" style="left:788.00px;top:465.15px;font:400 14px/1 'Liberation Sans', sans-serif;color:#2b2b2b;letter-spacing:0.900px;-webkit-text-stroke:0.3px #333;">Tag</span>
<span class="t" style="left:788.00px;top:491.15px;font:400 14px/1 'Liberation Sans', sans-serif;color:#888;letter-spacing:0.480px;">Tag not set</span>
<span class="t" style="left:1300.80px;top:397.45px;font:400 14px/1 'Liberation Sans', sans-serif;color:#2b2b2b;letter-spacing:1.120px;-webkit-text-stroke:0.3px #333;">Description</span>
<span class="t" style="left:1300.80px;top:422.35px;font:400 14px/1 'Liberation Sans', sans-serif;color:#262626;">-</span>
<span class="t" style="left:1316.90px;top:422.35px;font:400 14px/1 'Liberation Sans', sans-serif;color:#0070cc;letter-spacing:0.433px;">Edit</span>
<span class="t" style="left:1300.80px;top:465.15px;font:400 14px/1 'Liberation Sans', sans-serif;color:#2b2b2b;letter-spacing:0.762px;-webkit-text-stroke:0.3px #333;">Resource Group</span>
<span class="t" style="left:1300.60px;top:488.65px;font:400 14px/1 'Liberation Sans', sans-serif;color:#0070cc;letter-spacing:0.918px;">rg-acfnyjq3tzhw3zq</span>
<span class="t" style="left:1446.00px;top:488.65px;font:400 14px/1 'Liberation Sans', sans-serif;color:#262626;">|</span>
<span class="t" style="left:1458.70px;top:488.65px;font:400 14px/1 'Liberation Sans', sans-serif;color:#262626;letter-spacing:0.405px;">Default Resource Group</span>
<span class="t" style="left:1625.70px;top:488.65px;font:400 14px/1 'Liberation Sans', sans-serif;color:#0070cc;letter-spacing:0.433px;">Copy</span>
<span class="t" style="left:293.30px;top:592.76px;font:400 16px/1 'Liberation Sans', sans-serif;color:#0070cc;letter-spacing:0.385px;">Transit Router</span>
<span class="t" style="left:437.00px;top:592.76px;font:400 16px/1 'Liberation Sans', sans-serif;color:#262626;letter-spacing:0.593px;">Bandwidth Plans</span>
<span class="t" style="left:292.70px;top:652.15px;font:400 14px/1 'Liberation Sans', sans-serif;color:#fff;letter-spacing:0.455px;">Create Transit Router</span>
<span class="t" style="left:478.00px;top:652.15px;font:400 14px/1 'Liberation Sans', sans-serif;color:#262626;letter-spacing:0.600px;">Fuzzy Match</span>
<span class="t" style="left:607.80px;top:652.15px;font:400 14px/1 'Liberation Sans', sans-serif;color:#999;letter-spacing:0.512px;">Search by Keyword.</span>
<span class="t" style="left:1086.50px;top:652.15px;font:400 14px/1 'Liberation Sans', sans-serif;color:#262626;letter-spacing:0.575px;">Filter by Tag</span>
<span class="t" style="left:350.70px;top:713.60px;font:400 14px/1 'Liberation Sans', sans-serif;color:#4a4a4a;letter-spacing:0.367px;">Instance ID/Name</span>
<span class="t" style="left:611.20px;top:703.10px;font:400 14px/1 'Liberation Sans', sans-serif;color:#4a4a4a;letter-spacing:0.600px;">Security</span>
<span class="t" style="left:611.40px;top:724.25px;font:400 14px/1 'Liberation Sans', sans-serif;color:#4a4a4a;letter-spacing:0.800px;">Protection</span>
<span class="t" style="left:731.00px;top:713.60px;font:400 14px/1 'Liberation Sans', sans-serif;color:#4a4a4a;letter-spacing:0.350px;">Tag</span>
<span class="t" style="left:800.90px;top:703.10px;font:400 14px/1 'Liberation Sans', sans-serif;color:#4a4a4a;letter-spacing:0.586px;">Instance</span>
<span class="t" style="left:800.90px;top:724.25px;font:400 14px/1 'Liberation Sans', sans-serif;color:#4a4a4a;letter-spacing:0.640px;">Diagnostics</span>
<span class="t" style="left:942.80px;top:713.60px;font:400 14px/1 'Liberation Sans', sans-serif;color:#4a4a4a;letter-spacing:0.440px;">Region</span>
<span class="t" style="left:1084.90px;top:713.60px;font:400 14px/1 'Liberation Sans', sans-serif;color:#4a4a4a;letter-spacing:0.683px;">Edition</span>
<span class="t" style="left:1297.80px;top:713.60px;font:400 14px/1 'Liberation Sans', sans-serif;color:#4a4a4a;letter-spacing:0.840px;">Status</span>
<span class="t" style="left:1440.00px;top:713.60px;font:400 14px/1 'Liberation Sans', sans-serif;color:#4a4a4a;letter-spacing:0.778px;">Monitoring</span>
<span class="t" style="left:1573.70px;top:713.60px;font:400 14px/1 'Liberation Sans', sans-serif;color:#4a4a4a;letter-spacing:0.483px;">Actions</span>
<span class="t" style="left:983.50px;top:778.55px;font:400 14px/1 'Liberation Sans', sans-serif;color:#262626;letter-spacing:0.429px;">No data available.</span>
<span class="t" style="left:347.70px;top:856.65px;font:400 14px/1 'Liberation Sans', sans-serif;color:#c1c1c1;letter-spacing:0.500px;">Set Tags</span>
<span class="t" style="left:1292.20px;top:856.45px;font:400 14px/1 'Liberation Sans', sans-serif;color:#737373;letter-spacing:0.423px;">Items per Page</span>
<span class="t" style="left:1417.60px;top:856.45px;font:400 14px/1 'Liberation Sans', sans-serif;color:#262626;letter-spacing:2.400px;">20</span>
<span class="t" style="left:1493.20px;top:856.75px;font:400 14px/1 'Liberation Sans', sans-serif;color:#737373;letter-spacing:0.485px;">Total Items: 0</span>
<span class="t" style="left:1635.80px;top:856.45px;font:400 14px/1 'Liberation Sans', sans-serif;color:#c1c1c1;letter-spacing:0.457px;">Previous</span>
<span class="t" style="left:1716.50px;top:856.45px;font:400 14px/1 'Liberation Sans', sans-serif;color:#0070cc;">1</span>
<span class="t" style="left:1749.00px;top:856.45px;font:400 14px/1 'Liberation Sans', sans-serif;color:#c1c1c1;letter-spacing:0.667px;">Next</span>
</div>
<!-- window corners -->
<svg style="left:0;top:1072.4px;z-index:9" width="12.4" height="7.6" viewBox="0 0 12.4 7.6"><path d="M0 0 V7.6 H12.4 A12.4 7.6 0 0 1 0 0Z" fill="#000"/></svg>
<svg style="left:1911.4px;top:1066.6px;z-index:9" width="8.6" height="13.4" viewBox="0 0 8.6 13.4"><path d="M8.6 0 V13.4 H0 A8.6 13.4 0 0 0 8.6 0Z" fill="#000"/></svg>
</body>
</html>
